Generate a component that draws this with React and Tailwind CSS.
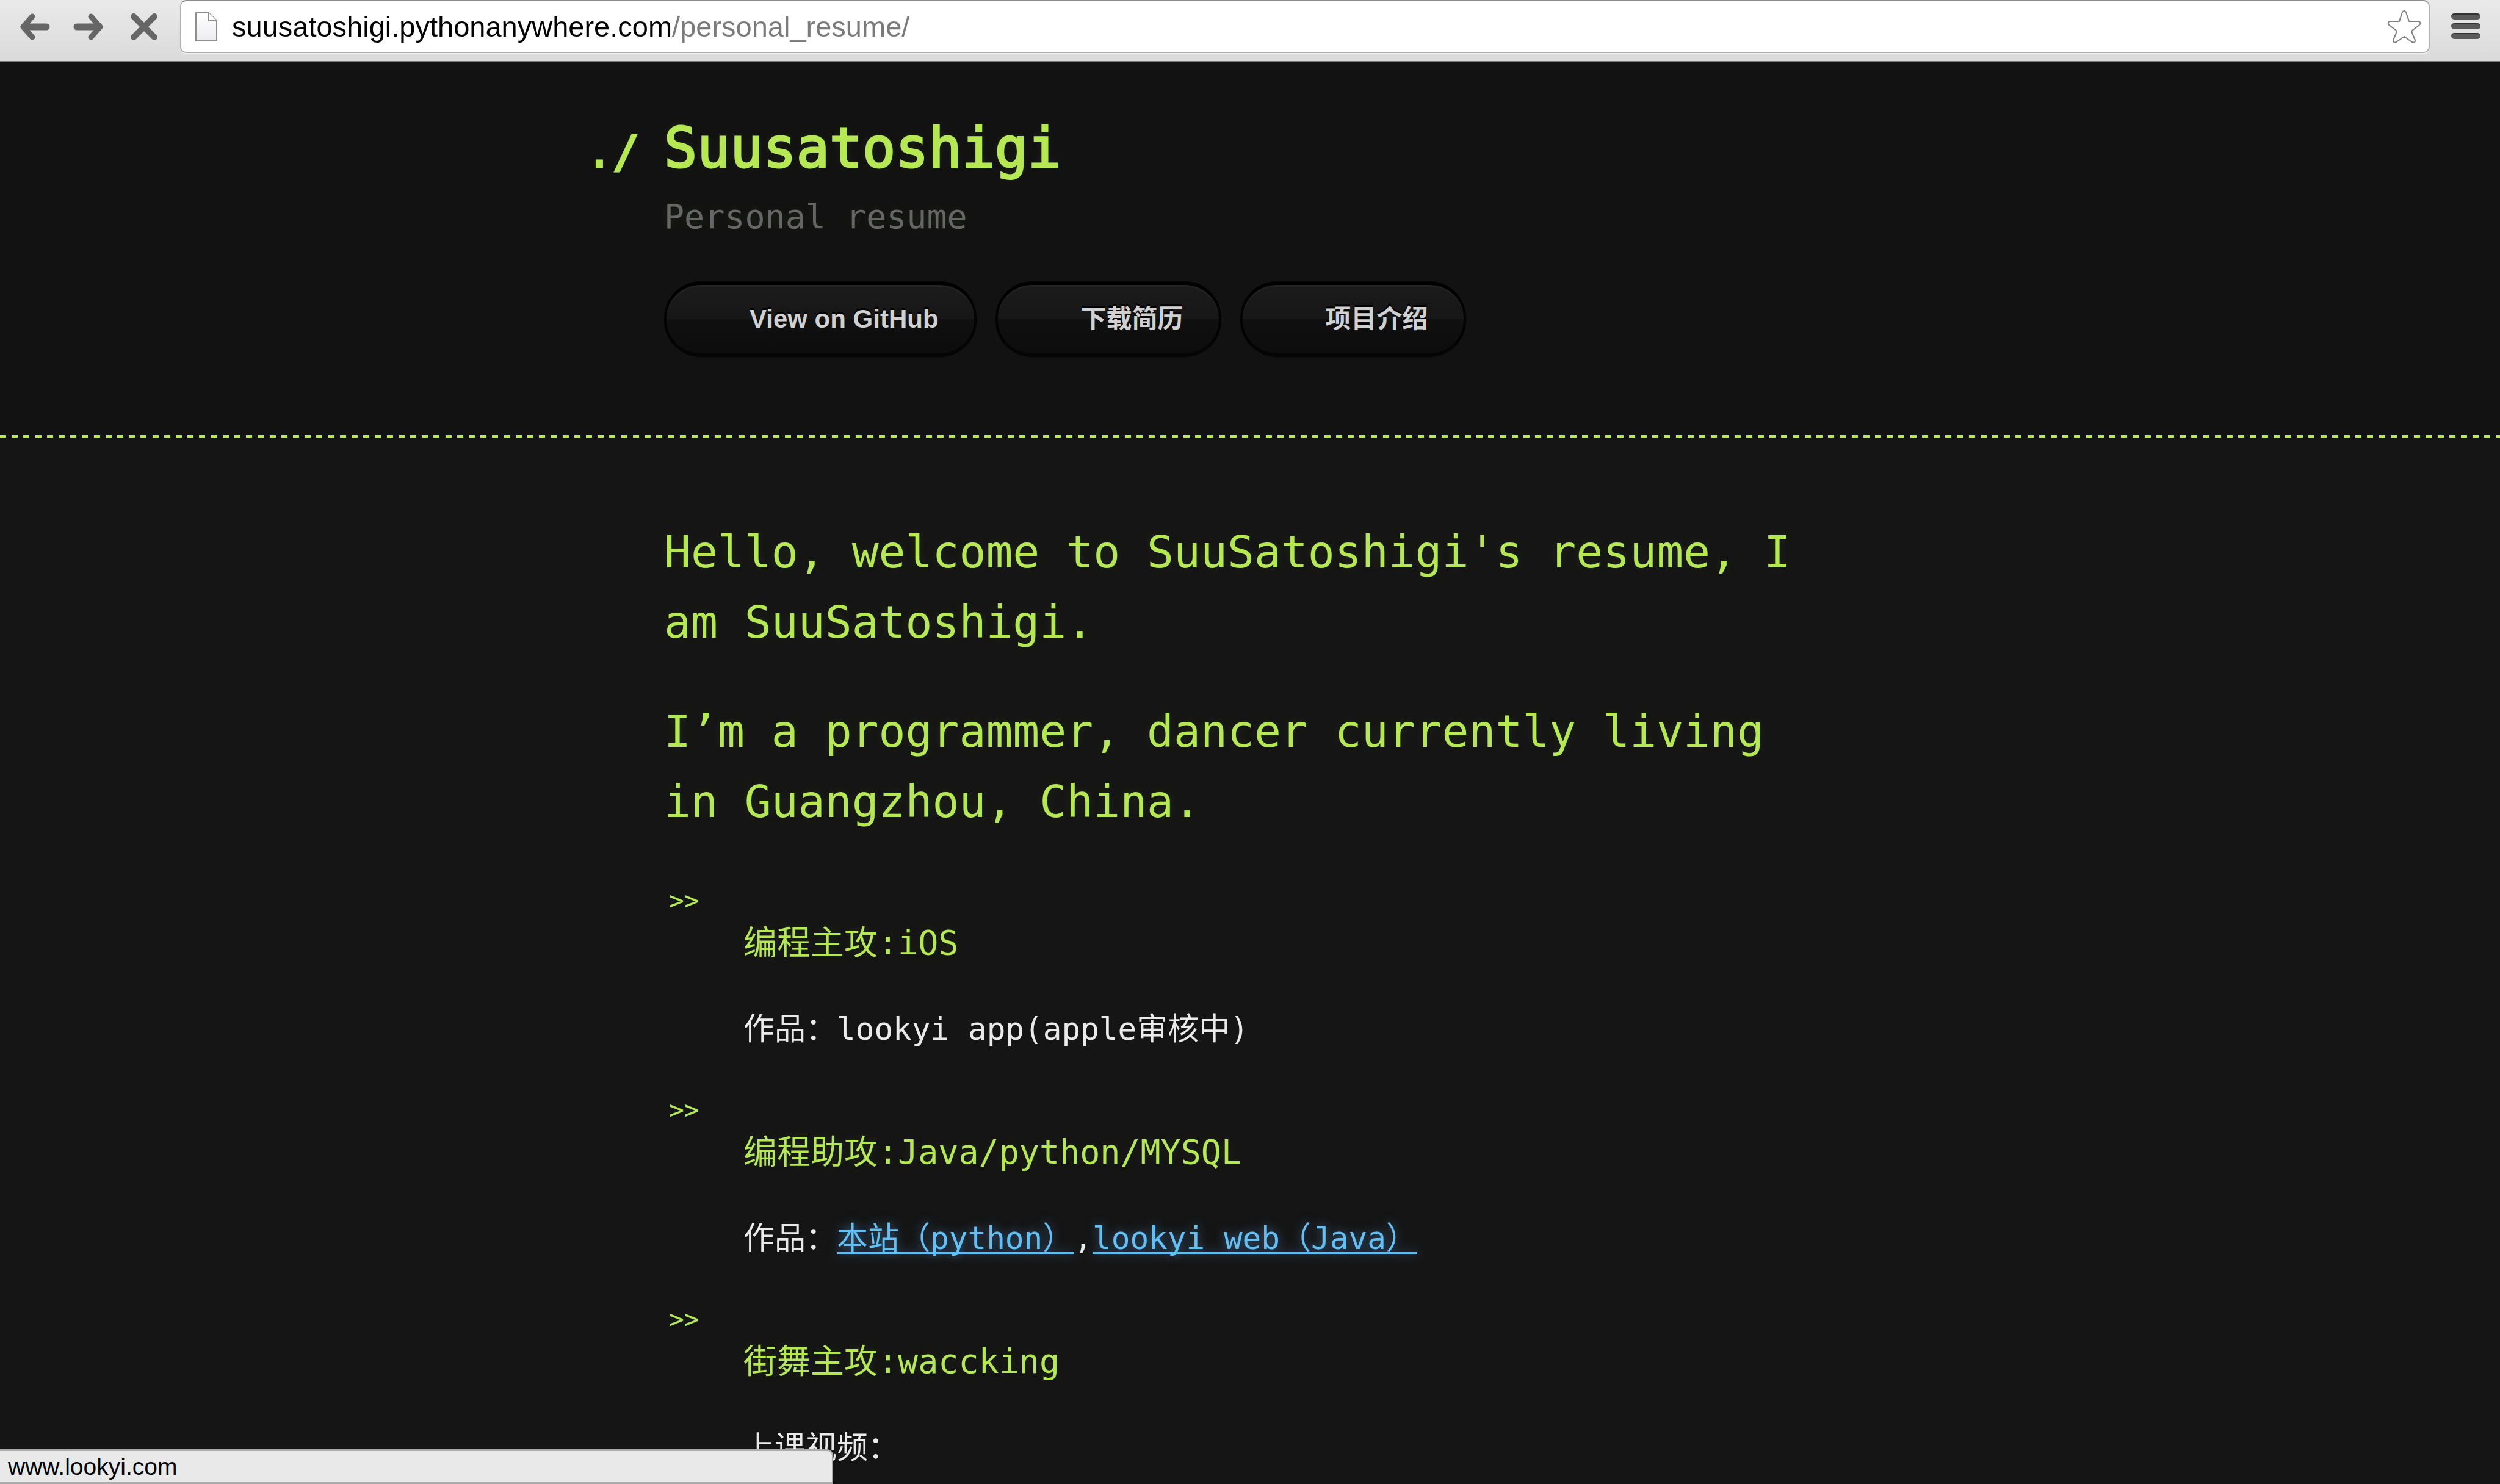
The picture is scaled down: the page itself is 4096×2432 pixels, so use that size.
const glow = "[text-shadow:0_3px_3px_rgba(0,0,0,0.1),0_0_16px_rgba(181,232,83,0.1)]";

function Arrow({ className = "" }) {
  return (
    <svg viewBox="0 0 50 44" className={`h-[44px] w-[50px] ${className}`} fill="none" aria-hidden="true">
      <path d="M21 5 L6 22 L21 39" stroke="#666" strokeWidth="9" strokeLinecap="round" strokeLinejoin="round" />
      <path d="M8 22 H44" stroke="#666" strokeWidth="11" strokeLinecap="round" />
      <path d="M5 22 L15 13 V31 Z" fill="#666" />
    </svg>
  );
}

function Toolbar() {
  return (
    <nav className="flex h-[102px] shrink-0 items-start border-b-2 border-[#777] bg-gradient-to-b from-[#eaeaea] to-[#dadada] px-8">
      <div className="flex h-[88px] w-[263px] shrink-0 items-center">
        <button aria-label="Back"><Arrow /></button>
        <button aria-label="Forward" className="ml-[38px]"><Arrow className="rotate-180" /></button>
        <button aria-label="Stop" className="ml-[43px]">
          <svg viewBox="0 0 46 44" className="h-[44px] w-[46px]" fill="none" aria-hidden="true">
            <path d="M6 5 L40 39 M40 5 L6 39" stroke="#666" strokeWidth="10" strokeLinecap="round" />
          </svg>
        </button>
      </div>
      <div className="flex h-[87px] min-w-0 flex-1 items-center rounded-[10px] border-2 border-[#b0b0b0] border-t-[#8c8c8c] bg-white pr-3 pl-[23px] shadow-[0_2px_0_#eeeeee]">
        <svg viewBox="0 0 36 50" className="h-[50px] w-[36px] shrink-0" aria-hidden="true">
          <defs>
            <linearGradient id="sheet" x1="0" y1="0" x2="0" y2="1">
              <stop offset="0" stopColor="#fff" />
              <stop offset="1" stopColor="#ececf0" />
            </linearGradient>
          </defs>
          <path d="M1 2 H22 L35 15 V48 H1 Z" fill="url(#sheet)" stroke="#8e8e8e" strokeWidth="2" />
          <path d="M22 2 V15 H35" fill="#fff" stroke="#8e8e8e" strokeWidth="2" />
        </svg>
        <input
          aria-label="Address"
          type="text"
          defaultValue="suusatoshigi.pythonanywhere.com/personal_resume/"
          className="ml-[24px] h-[80px] min-w-0 flex-1 bg-[linear-gradient(90deg,#000_721px,#7a7a7a_721px)] bg-clip-text font-['Liberation_Sans',sans-serif] text-[47px] text-transparent outline-none"
        />
        <button aria-label="Bookmark this page">
          <svg viewBox="0 0 56 54" className="h-[54px] w-[56px]" fill="none" aria-hidden="true">
            <path
              d="M25 3 Q28 -1 31 3 L36 18 H52 Q56 20 53 24 L41 33 Q40 35 41 37 L46 49 Q46 54 41 52 L28 43 L15 52 Q10 54 10 49 L15 37 Q16 35 15 33 L3 24 Q0 20 4 18 H20 Z"
              stroke="#808080"
              strokeWidth="2"
              strokeLinejoin="round"
            />
          </svg>
        </button>
      </div>
      <button aria-label="Menu" className="ml-[35px] flex h-[86px] w-[48px] flex-col justify-center gap-[6px]">
        <span className="h-[10px] rounded-full border-t-2 border-[#333] bg-[#5a5a5a]" />
        <span className="h-[10px] rounded-full border-t-2 border-[#333] bg-[#5a5a5a]" />
        <span className="h-[10px] rounded-full border-t-2 border-[#333] bg-[#5a5a5a]" />
      </button>
    </nav>
  );
}

function PillButton({ children }) {
  return (
    <button className="flex h-[124px] items-center rounded-[60px] border-x-4 border-t-6 border-b-6 border-x-[#030303] border-t-black border-b-[#050505] bg-[linear-gradient(#1b1b1b,#171717_50%,#101010_50%,#0d0d0d)] pr-[58px] pl-[136px] font-['Liberation_Sans','Noto_Sans_CJK_SC',sans-serif] text-[42px] leading-[48px] font-bold whitespace-nowrap text-[#d0d0d0] shadow-[inset_0_3px_0_#222222] [text-shadow:0_-3px_0_#000]">
      {children}
    </button>
  );
}

function Entry({ title, children }) {
  return (
    <li className="flex items-start">
      <span className="w-[130px] shrink-0 pl-2 text-[41px] leading-[76px] text-[#b5e853]">&gt;&gt;</span>
      <div className="pt-16">
        <h3 className={`text-[55px] leading-[86px] text-[#b5e853] ${glow}`}>{title}</h3>
        <p className="mt-[60px] text-[51px] leading-[78px] text-[#eaeaea]">{children}</p>
      </div>
    </li>
  );
}

function Link({ href, children }) {
  return (
    <a
      href={href}
      className="text-[#63c0f5] underline decoration-[3px] underline-offset-[5px] [text-decoration-skip-ink:none] [text-shadow:0_0_16px_rgba(104,182,255,0.5)]"
    >
      {children}
    </a>
  );
}

export default function App() {
  return (
    <div className="flex h-screen flex-col overflow-hidden bg-[#151515] font-['DejaVu_Sans_Mono','Noto_Sans_CJK_SC',monospace]">
      <Toolbar />
      <header className="shrink-0 bg-[#121212] pt-[85px]">
        <div className="mx-auto max-w-[1920px] pb-32">
          <h1 className={`-ml-32 flex items-baseline text-[90px] leading-[112px] font-normal text-[#b5e853] [-webkit-text-stroke:3px_#b5e853] ${glow}`}>
            <span className="w-32 text-[73px] leading-none">./</span>
            Suusatoshigi
          </h1>
          <p className={`mt-3 text-[55px] leading-[88px] text-[#666] ${glow}`}>Personal resume</p>
          <div className="mt-[62px] flex gap-[31px]">
            <PillButton>View on GitHub</PillButton>
            <PillButton>下载简历</PillButton>
            <PillButton>项目介绍</PillButton>
          </div>
        </div>
        <div className="h-1 bg-[repeating-linear-gradient(90deg,#b5e853_0_10px,transparent_10px_19px,#b5e853_19px_29px,transparent_29px_38px,#b5e853_38px_48px,transparent_48px_58px,#b5e853_58px_68px,transparent_68px_77px,#b5e853_77px_87px,transparent_87px_96px)]" />
      </header>
      <main className="mx-auto w-full max-w-[1920px] pt-[130px]">
        <div className={`flex flex-col gap-16 text-[73px] leading-[115px] text-[#b5e853] ${glow}`}>
          <h2>Hello, welcome to SuuSatoshigi's resume, I am SuuSatoshigi.</h2>
          <h2>I’m a programmer, dancer currently living in Guangzhou, China.</h2>
        </div>
        <ul className="mt-[67px] flex flex-col gap-[55px]">
          <Entry title="编程主攻:iOS">作品：lookyi app(apple审核中)</Entry>
          <Entry title="编程助攻:Java/python/MYSQL">
            作品：<Link href="#site">本站（python）</Link>,<Link href="#lookyi">lookyi web（Java）</Link>
          </Entry>
          <Entry title="街舞主攻:waccking">上课视频：</Entry>
        </ul>
      </main>
      <div className="fixed bottom-0 left-0 w-1/3 rounded-tr-[10px] border-t-3 border-r-2 border-b-3 border-[#ababab] bg-[#e9e9e9] pl-[13px] font-['Liberation_Sans',sans-serif] text-[39px] leading-[51px] text-black">
        www.lookyi.com
      </div>
    </div>
  );
}
